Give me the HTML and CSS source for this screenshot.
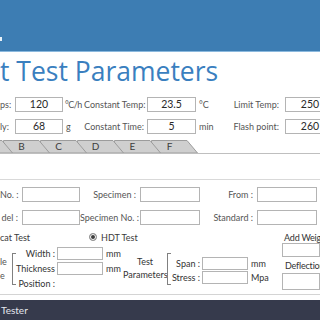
FILE: index.html
```html
<!DOCTYPE html>
<html>
<head>
  <link rel="stylesheet" href="styles.css">
</head>
<body>
  <div class="screen">
    <div class="topbar"><span class="topbar-mark"></span></div>
    <h1 class="title">t Test Parameters</h1>

    <div class="params">
      <span class="lbl left">ps:</span>
      <div class="field">120</div>
      <span class="unit tight">°C/h</span>
      <span class="lbl">Constant Temp:</span>
      <div class="field">23.5</div>
      <span class="unit">°C</span>
      <span class="lbl far">Limit Temp:</span>
      <div class="field">250</div>

      <span class="lbl left">ly:</span>
      <div class="field">68</div>
      <span class="unit">g</span>
      <span class="lbl">Constant Time:</span>
      <div class="field">5</div>
      <span class="unit">min</span>
      <span class="lbl far">Flash point:</span>
      <div class="field">260</div>
    </div>

    <div class="tabs">
      <div class="tab"><svg viewBox="0 0 47 13" preserveAspectRatio="none"><polygon points="0.5,13 0.5,0.5 36,0.5 46.5,13"/></svg></div>
      <div class="tab"><svg viewBox="0 0 47 13" preserveAspectRatio="none"><polygon points="0.5,13 0.5,0.5 36,0.5 46.5,13"/></svg><span>B</span></div>
      <div class="tab"><svg viewBox="0 0 47 13" preserveAspectRatio="none"><polygon points="0.5,13 0.5,0.5 36,0.5 46.5,13"/></svg><span>C</span></div>
      <div class="tab"><svg viewBox="0 0 47 13" preserveAspectRatio="none"><polygon points="0.5,13 0.5,0.5 36,0.5 46.5,13"/></svg><span>D</span></div>
      <div class="tab"><svg viewBox="0 0 47 13" preserveAspectRatio="none"><polygon points="0.5,13 0.5,0.5 36,0.5 46.5,13"/></svg><span>E</span></div>
      <div class="tab"><svg viewBox="0 0 47 13" preserveAspectRatio="none"><polygon points="0.5,13 0.5,0.5 36,0.5 46.5,13"/></svg><span>F</span></div>
    </div>

    <div class="panel">
      <div class="info">
        <span class="lbl">No. :</span>
        <div class="field"></div>
        <span class="lbl">Specimen :</span>
        <div class="field"></div>
        <span class="lbl">From :</span>
        <div class="field"></div>

        <span class="lbl">del :</span>
        <div class="field"></div>
        <span class="lbl">Specimen No. :</span>
        <div class="field"></div>
        <span class="lbl">Standard :</span>
        <div class="field"></div>
      </div>

      <div class="lower">
        <div class="lower-main">
          <div class="modes">
            <span class="mode">cat Test</span>
            <span class="mode hdt"><span class="radio"></span>HDT Test</span>
          </div>

          <div class="group">
            <div class="size">
              <div class="size-side">le<br>e</div>
              <div class="bracket"></div>
              <div class="rows">
                <span class="glbl">Width :</span>
                <div class="field"></div>
                <span class="gunit">mm</span>
                <span class="glbl">Thickness :</span>
                <div class="field"></div>
                <span class="gunit">mm</span>
                <span class="glbl">Position :</span>
                <span></span>
                <span></span>
              </div>
            </div>

            <div class="caption">Test<br>Parameters</div>

            <div class="span-group">
              <div class="bracket"></div>
              <div class="rows short">
                <span class="glbl">Span :</span>
                <div class="field"></div>
                <span class="gunit">mm</span>
                <span class="glbl">Stress :</span>
                <div class="field"></div>
                <span class="gunit">Mpa</span>
              </div>
            </div>
          </div>
        </div>

        <div class="side">
          <span class="side-lbl">Add Weig</span>
          <div class="field side-box"></div>
          <span class="side-lbl gap">Deflection</span>
          <div class="field side-box tall"></div>
        </div>
      </div>
    </div>

    <div class="footer">Tester</div>
  </div>
</body>
</html>
```

FILE: styles.css
```css
body {
  margin: 0;
  background-color: #ffffff;
  font-family: Lato, "Open Sans", sans-serif;
  color: #555555;
}

.screen {
  width: 320px;
  height: 320px;
  overflow: hidden;
}

.topbar {
  height: 52px;
  background-color: #3d7db3;
  border-bottom: 1px solid #8bb9de;
  padding-top: 37px;
  box-sizing: border-box;
}

.topbar-mark {
  display: block;
  width: 2px;
  height: 4px;
  background-color: #e8f1f8;
}

.title {
  margin: 3px 0 0 0;
  font-family: "Open Sans", sans-serif;
  font-size: 26.5px;
  font-weight: 400;
  line-height: 32px;
  color: #3a7fbf;
}

.field {
  background-color: #ffffff;
  border: 1px solid #b4b4b4;
  box-sizing: border-box;
  font-size: 10.5px;
  color: #2a2a2a;
  text-align: center;
  line-height: 13px;
}

.lbl {
  font-size: 9px;
  text-align: right;
  padding-right: 3px;
  white-space: nowrap;
}

.lbl.left {
  text-align: left;
  padding-right: 0;
}

.lbl.far {
  padding-right: 6px;
}

.unit {
  font-size: 9px;
  padding-left: 3px;
  white-space: nowrap;
}

.unit.tight {
  padding-left: 2px;
  letter-spacing: -0.5px;
}

.params {
  display: grid;
  grid-template-columns: 15px 48px 21px 63px 49px 37px 52px 50px;
  grid-auto-rows: 15px;
  row-gap: 7px;
  align-items: center;
  margin-top: 10px;
}

.params .field {
  height: 15px;
}

.tabs {
  display: flex;
  height: 13px;
  margin: 6px 0 0 -34px;
  border-bottom: 1px solid #bfbfbf;
}

.tab {
  position: relative;
  flex: none;
  width: 47px;
  height: 13px;
  margin-right: -10px;
}

.tab:nth-child(1) { z-index: 6; }
.tab:nth-child(2) { z-index: 5; }
.tab:nth-child(3) { z-index: 4; }
.tab:nth-child(4) { z-index: 3; }
.tab:nth-child(5) { z-index: 2; }
.tab:nth-child(6) { z-index: 1; }

.tab svg {
  position: absolute;
  top: 0;
  left: 0;
  width: 47px;
  height: 13px;
}

.tab polygon {
  fill: #cfcfcf;
  stroke: #9c9c9c;
  stroke-width: 1;
}

.tab span {
  position: relative;
  display: block;
  width: 37px;
  text-align: center;
  font-size: 10px;
  line-height: 13px;
  color: #3d3d3d;
}

.panel {
  margin-top: 25px;
  border-top: 1px solid #d9d9d9;
  border-bottom: 1px solid #d4d4d4;
  padding: 7px 0 3px 0;
}

.info {
  display: grid;
  grid-template-columns: 22px 58px 60px 60px 57px 60px;
  grid-auto-rows: 15px;
  row-gap: 8px;
  align-items: center;
}

.info .field {
  height: 15px;
}

.info .lbl {
  padding-right: 4px;
}

.lower {
  display: flex;
}

.lower-main {
  width: 282px;
  flex: none;
}

.modes {
  display: flex;
  align-items: center;
  height: 12px;
  margin-top: 6px;
  font-size: 9px;
  color: #3a3a3a;
}

.mode {
  display: flex;
  align-items: center;
}

.mode.hdt {
  margin-left: 59px;
}

.radio {
  width: 6px;
  height: 6px;
  border: 1px solid #9a9a9a;
  border-radius: 50%;
  background-color: #3c3c3c;
  box-shadow: inset 0 0 0 1px #ffffff;
  margin-right: 4px;
}

.group {
  display: flex;
  margin-top: 3px;
  height: 45px;
}

.size,
.span-group {
  display: flex;
  align-items: flex-start;
}

.size-side {
  width: 12px;
  padding-top: 9px;
  font-size: 9px;
  line-height: 14px;
}

.bracket {
  width: 3px;
  height: 30px;
  margin-top: 7px;
  border: 1px solid #808080;
  border-right: none;
}

.rows {
  display: grid;
  grid-template-columns: 41px 46px 20px;
  grid-auto-rows: 15px;
  align-items: center;
}

.rows.short {
  grid-template-columns: 31px 46px 22px;
  grid-auto-rows: 14px;
}

.span-group .rows {
  margin-top: 10px;
}

.rows .field {
  height: 13px;
}

.glbl {
  font-size: 9px;
  color: #333333;
  text-align: right;
  padding-right: 2px;
  white-space: nowrap;
}

.gunit {
  font-size: 9px;
  color: #333333;
  padding-left: 3px;
}

.caption {
  width: 44px;
  padding-top: 9px;
  font-size: 9px;
  line-height: 13px;
  text-align: center;
  color: #333333;
}

.side {
  display: flex;
  flex-direction: column;
  width: 38px;
  flex: none;
  padding-top: 8px;
}

.side-lbl {
  font-size: 9px;
  color: #333333;
  line-height: 10px;
  padding-left: 2px;
  white-space: nowrap;
  letter-spacing: -0.2px;
}

.side-lbl.gap {
  margin-top: 4px;
  padding-left: 3px;
}

.side-box {
  height: 14px;
}

.side-box.tall {
  height: 17px;
  margin-top: 2px;
}

.footer {
  margin-top: 5px;
  height: 25px;
  background-color: #363a4c;
  color: #e4e6ee;
  font-size: 10px;
  line-height: 21px;
  padding-left: 1px;
}
```
